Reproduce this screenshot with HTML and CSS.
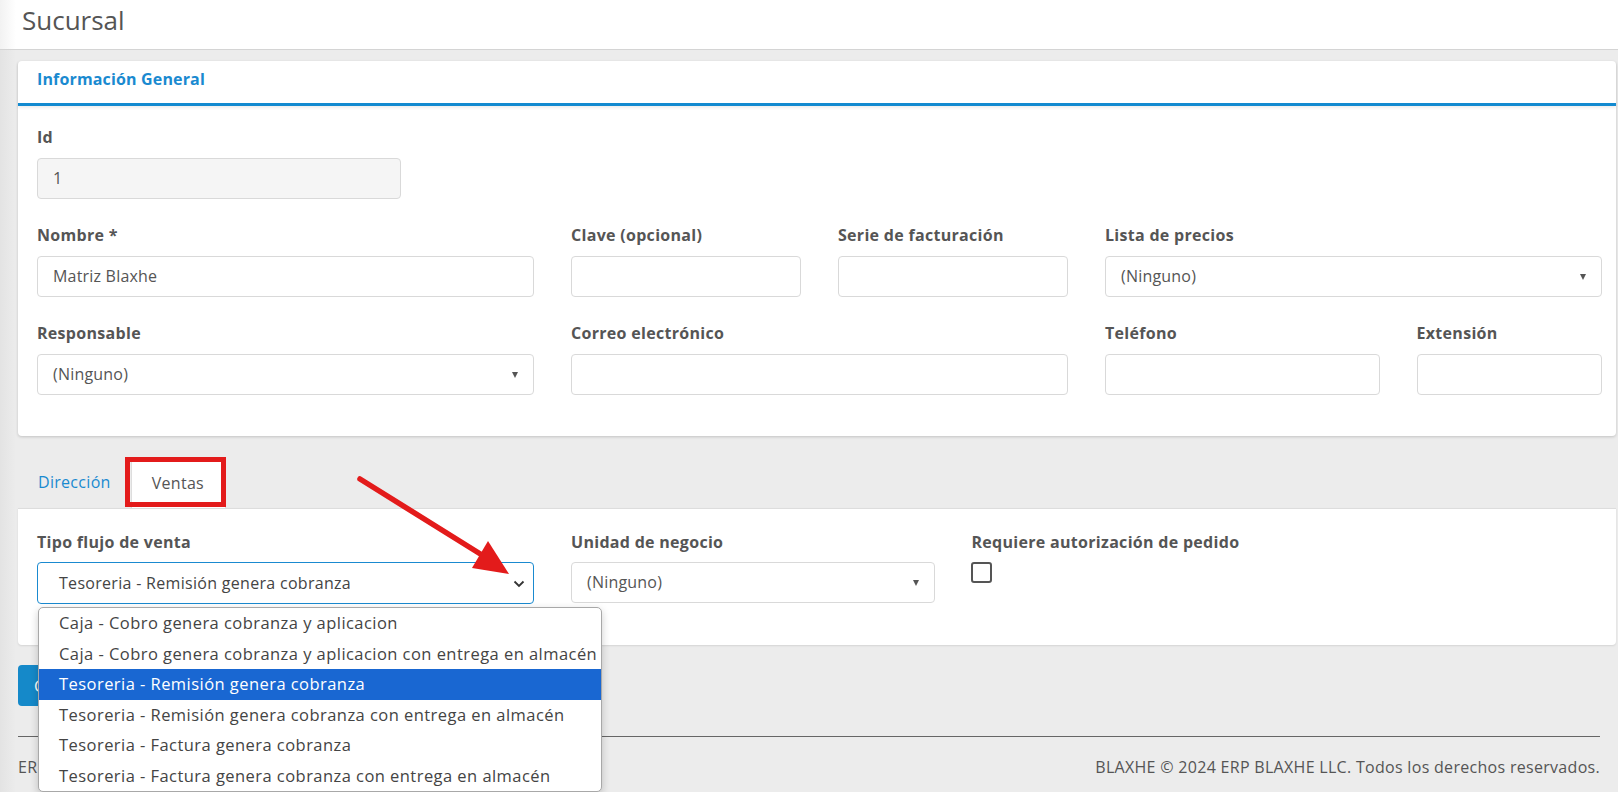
FILE: index.html
```html
<!DOCTYPE html>
<html lang="es">
<head>
<meta charset="utf-8">
<title>Sucursal</title>
<link rel="stylesheet" href="styles.css">
</head>
<body>
<div class="page">
  <header class="topbar">
    <h1 class="page-title">Sucursal</h1>
  </header>

  <main class="content">
    <section class="card">
      <div class="card-header">Información General</div>
      <div class="card-body">
        <div class="grid">
          <div class="field span-3">
            <label class="lbl">Id</label>
            <div class="input disabled">1</div>
          </div>
        </div>
        <div class="grid">
          <div class="field span-4">
            <label class="lbl">Nombre *</label>
            <div class="input">Matriz Blaxhe</div>
          </div>
          <div class="field span-2">
            <label class="lbl">Clave (opcional)</label>
            <div class="input"></div>
          </div>
          <div class="field span-2">
            <label class="lbl">Serie de facturación</label>
            <div class="input"></div>
          </div>
          <div class="field span-4">
            <label class="lbl">Lista de precios</label>
            <div class="input select">(Ninguno)<span class="caret"></span></div>
          </div>
        </div>
        <div class="grid">
          <div class="field span-4">
            <label class="lbl">Responsable</label>
            <div class="input select">(Ninguno)<span class="caret"></span></div>
          </div>
          <div class="field span-4">
            <label class="lbl">Correo electrónico</label>
            <div class="input"></div>
          </div>
          <div class="span-4 subgrid">
            <div class="field">
              <label class="lbl">Teléfono</label>
              <div class="input"></div>
            </div>
            <div class="field">
              <label class="lbl">Extensión</label>
              <div class="input"></div>
            </div>
          </div>
        </div>
      </div>
    </section>

    <nav class="tabs">
      <a class="tab">Dirección</a>
      <a class="tab active">Ventas<span class="mark-box"></span></a>
    </nav>
    <section class="panel">
      <div class="grid">
        <div class="field span-4">
          <label class="lbl">Tipo flujo de venta</label>
          <div class="native-wrap">
            <div class="input native focus">Tesoreria - Remisión genera cobranza
              <svg class="chev" width="12" height="8" viewBox="0 0 12 8"><path d="M1.5 1.5 L6 6 L10.5 1.5" fill="none" stroke="#333" stroke-width="1.8"/></svg>
            </div>
            <ul class="options">
              <li>Caja - Cobro genera cobranza y aplicacion</li>
              <li>Caja - Cobro genera cobranza y aplicacion con entrega en almacén</li>
              <li class="sel">Tesoreria - Remisión genera cobranza</li>
              <li>Tesoreria - Remisión genera cobranza con entrega en almacén</li>
              <li>Tesoreria - Factura genera cobranza</li>
              <li>Tesoreria - Factura genera cobranza con entrega en almacén</li>
            </ul>
          </div>
        </div>
        <div class="field span-3">
          <label class="lbl">Unidad de negocio</label>
          <div class="input select">(Ninguno)<span class="caret"></span></div>
        </div>
        <div class="field span-5">
          <label class="lbl">Requiere autorización de pedido</label>
          <span class="checkbox"></span>
        </div>
      </div>
    </section>

    <div class="actions">
      <button class="btn">Guardar</button>
    </div>

    <footer class="footer">
      <span>ERP BLAXHE</span>
      <span>BLAXHE © 2024 ERP BLAXHE LLC. Todos los derechos reservados.</span>
    </footer>
  </main>

  <svg class="annot-arrow" width="1618" height="792" viewBox="0 0 1618 792">
    <line x1="360" y1="479" x2="482" y2="555" stroke="#e31b1b" stroke-width="5.5" stroke-linecap="round"/>
    <polygon points="509,574 472,568 488,541" fill="#e31b1b"/>
  </svg>
</div>
</body>
</html>
```

FILE: styles.css
```css
* { box-sizing: border-box; }
html, body { margin: 0; padding: 0; }
body {
  font-family: "Open Sans", "Noto Sans", sans-serif;
  color: #555;
  background: #ececec;
  width: 1618px;
  height: 792px;
  overflow: hidden;
}
.page {
  position: relative;
  height: 792px;
  background: linear-gradient(to right, #e3e3e3 0, #ececec 16px);
}
.topbar {
  height: 50px;
  background: linear-gradient(to right, #f2f2f2 0, #ffffff 16px);
  border-bottom: 1px solid #d4d4d4;
  padding-left: 22px;
}
.page-title {
  margin: 0;
  font-size: 26px;
  font-weight: 400;
  line-height: 41px;
  color: #555;
}
.content {
  padding: 11px 2px 0 18px;
}
.card {
  background: #fff;
  border-radius: 4px;
  box-shadow: 0 1px 3px rgba(0,0,0,0.18);
}
.card-header {
  height: 45px;
  padding-left: 19px;
  line-height: 37px;
  font-size: 16px;
  font-weight: 700;
  letter-spacing: 0.15px;
  color: #1a8ad0;
  border-bottom: 3px solid #128ad0;
  box-shadow: 0 2px 3px rgba(0,0,0,0.07);
}
.card-body {
  padding: 21px 14px 15px 19px;
}
.grid {
  display: grid;
  grid-template-columns: repeat(12, 1fr);
  column-gap: 37px;
}
.span-2 { grid-column: span 2; }
.span-3 { grid-column: span 3; }
.span-4 { grid-column: span 4; }
.span-5 { grid-column: span 5; }
.subgrid {
  display: grid;
  grid-template-columns: 1.48fr 1fr;
  column-gap: 37px;
}
.field { margin-bottom: 26px; }
.lbl {
  display: block;
  font-size: 16px;
  font-weight: 700;
  letter-spacing: 0.3px;
  line-height: 20px;
  margin-bottom: 11px;
  color: #555;
}
.input {
  position: relative;
  height: 41px;
  border: 1px solid #d9d9d9;
  border-radius: 4px;
  background: #fff;
  padding: 0 15px;
  font-size: 16px;
  letter-spacing: 0.2px;
  line-height: 39px;
  color: #555;
  white-space: nowrap;
}
.input.disabled { background: #f5f5f5; }
.caret {
  position: absolute;
  right: 15px;
  top: 17px;
  width: 0;
  height: 0;
  border-left: 3.5px solid transparent;
  border-right: 3.5px solid transparent;
  border-top: 6px solid #555;
}
.tabs {
  display: flex;
  margin-top: 23px;
  height: 49px;
}
.tab {
  position: relative;
  padding: 0 20px;
  line-height: 47px;
  font-size: 16px;
  letter-spacing: 0.3px;
  color: #1a8ad0;
  text-decoration: none;
}
.tab.active {
  background: #fff;
  color: #555;
  border: 1px solid #ddd;
  border-bottom: none;
  padding: 0 21px 0 20px;
}
.mark-box {
  position: absolute;
  left: -7px;
  top: -3px;
  width: 101px;
  height: 50px;
  border: 5px solid #e31b1b;
}
.panel {
  background: #fff;
  border-top: 1px solid #ddd;
  border-radius: 0 0 4px 4px;
  padding: 23px 14px 14px 19px;
  height: 137px;
  box-shadow: 0 1px 2px rgba(0,0,0,0.1);
}
.panel .lbl { margin-bottom: 10px; }
.native-wrap { position: relative; }
.input.native {
  height: 42px;
  border-color: #1a8ad0;
  border-radius: 4px;
  padding-left: 21px;
  line-height: 40px;
  letter-spacing: 0.3px;
  color: #444;
}
.chev {
  position: absolute;
  right: 8px;
  top: 17px;
}
.options {
  position: absolute;
  z-index: 5;
  left: 1px;
  top: 45px;
  width: 564px;
  margin: 0;
  padding: 0;
  list-style: none;
  background: #fff;
  border: 1px solid #a8a8a8;
  border-radius: 5px;
  box-shadow: 0 3px 8px rgba(0,0,0,0.2);
  overflow: hidden;
}
.options li {
  height: 30.5px;
  line-height: 30.5px;
  padding-left: 20px;
  font-size: 16.5px;
  letter-spacing: 0.45px;
  color: #444;
  white-space: nowrap;
}
.options li.sel {
  background: #1967d2;
  color: #fff;
}
.checkbox {
  display: block;
  width: 21px;
  height: 21px;
  margin-top: 1px;
  margin-left: -1px;
  border: 2px solid #555;
  border-radius: 3px;
}
.actions { margin-top: 20px; }
.btn {
  height: 41px;
  padding: 0 16px;
  border: none;
  border-radius: 4px;
  background: #1589c9;
  color: #fff;
  font-family: inherit;
  font-size: 16px;
}
.footer {
  margin: 30px 16px 0 0;
  border-top: 1px solid #666;
  display: flex;
  justify-content: space-between;
  padding-top: 19px;
  font-size: 16px;
  letter-spacing: 0.3px;
  color: #555;
}
.annot-arrow {
  position: absolute;
  left: 0;
  top: 0;
  pointer-events: none;
  z-index: 10;
}
```
